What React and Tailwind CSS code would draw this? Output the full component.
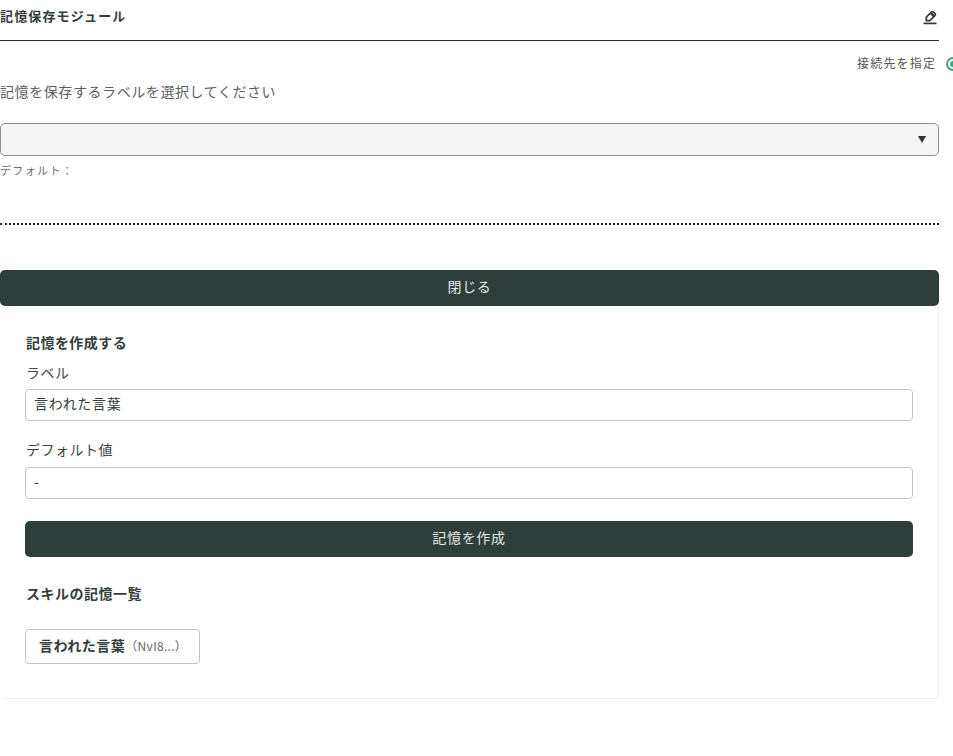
import React from "react";

const FONT = '"Noto Sans CJK JP", "Noto Sans", sans-serif';

function Pen() {
  return (
    <svg width="16" height="16" viewBox="0 0 16 16" fill="none" stroke="#2f3e3b" strokeWidth="1.7" strokeLinejoin="round" strokeLinecap="butt">
      <path d="M4.3 8.2 9.6 2.9a1.2 1.2 0 0 1 1.7 0l1.8 1.8a1.2 1.2 0 0 1 0 1.7L7.8 11.7H4.3z" />
      <path d="M8.6 3.9l3.5 3.5" strokeWidth="2.4" />
      <path d="M1.5 14.4h13" />
    </svg>
  );
}

export default function App() {
  return (
    <div className="relative w-[953px] h-[756px] overflow-hidden bg-white text-[#333d3b]" style={{ fontFamily: FONT }}>
      <div className="w-[939px]">
        <div className="flex h-[41px] items-start justify-between border-b border-[#2b2b2b] pt-[7px]">
          <h2 className="text-[13px] font-bold leading-[18px] tracking-[1.15px]">記憶保存モジュール</h2>
          <span className="mr-[1px] mt-[2px]"><Pen /></span>
        </div>

        <p className="mt-[40px] text-[14px] leading-[20px] tracking-[0.58px] text-[#5a5f5e]">記憶を保存するラベルを選択してください</p>

        <div className="mt-[22px] flex h-[33px] items-center justify-end rounded-[5px] border border-[#8f8f8f] bg-[#f5f5f5] pr-[12px]">
          <svg width="8" height="7" viewBox="0 0 8 7"><path d="M0 0h8L4 7z" fill="#333" /></svg>
        </div>
        <p className="mt-[6px] text-[11px] leading-[16px] tracking-[1.35px] text-[#6a6a6a]">デフォルト：</p>

        <div className="mt-[45px] border-t-2 border-dotted border-[#222]" />

        <button className="mt-[45px] flex h-[36px] w-full items-center justify-center rounded-[5px] bg-[#2f3e3b] pb-[3px] text-[14px] tracking-[0.67px] text-[#e8e8e8]">閉じる</button>

        <div className="h-[393px] rounded-b-[5px] border border-t-0 border-l-0 border-[#eef0ef] pl-[25px] pr-[25px] pt-[26px]">
          <h3 className="ml-[1px] text-[14px] font-bold leading-[20px] tracking-[0.45px]">記憶を作成する</h3>
          <label className="ml-[1px] mt-[10px] block text-[14px] leading-[20px] tracking-[0.5px] text-[#444]">ラベル</label>
          <div className="mt-[7px] flex h-[32px] items-center rounded-[4px] border border-[#c4c4c4] px-[8px] pb-[3px] text-[14px] tracking-[0.67px]">言われた言葉</div>
          <label className="ml-[1px] mt-[18px] block text-[14px] leading-[20px] tracking-[0.5px] text-[#444]">デフォルト値</label>
          <div className="mt-[8px] flex h-[32px] items-center rounded-[4px] border border-[#c4c4c4] px-[8px] pb-[3px] text-[14px]">-</div>
          <button className="mt-[22px] flex h-[36px] w-full items-center justify-center rounded-[5px] bg-[#2f3e3b] pb-[3px] text-[14px] tracking-[0.67px] text-[#e8e8e8]">記憶を作成</button>
          <h3 className="ml-[1px] mt-[26px] text-[14px] font-bold leading-[20px] tracking-[0.5px]">スキルの記憶一覧</h3>
          <div className="mt-[26px] flex h-[35px] w-[175px] items-center rounded-[4px] border border-[#c4c4c4] pl-[13px] pb-[2px]">
            <span className="text-[14px] font-bold tracking-[0.5px]">言われた言葉</span>
            <span className="text-[12px] tracking-[0.3px] text-[#666]">（NvI8...）</span>
          </div>
        </div>
      </div>

      <div className="absolute left-[857px] top-[54px] text-[12px] leading-[18px] tracking-[1.2px] text-[#555]">接続先を指定</div>
      <div className="absolute left-[946px] top-[57px] h-[14px] w-[14px] rounded-full border-2 border-[#3aa88a]">
        <div className="absolute left-[2px] top-[2px] h-[6px] w-[6px] rounded-full bg-[#3aa88a]" />
      </div>
    </div>
  );
}
